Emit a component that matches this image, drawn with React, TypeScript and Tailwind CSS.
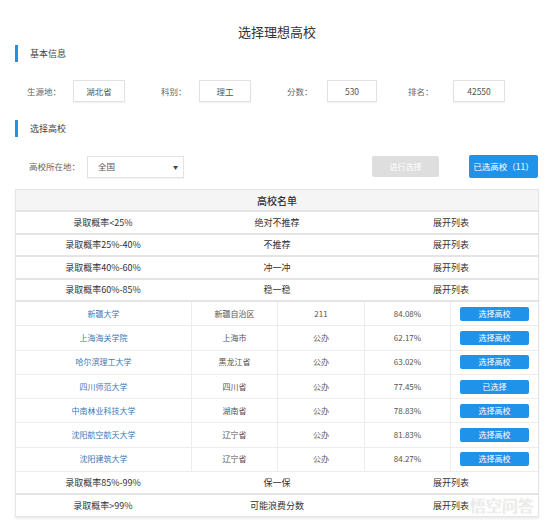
import React from 'react';

const font = { fontFamily: '"Noto Sans CJK SC", "Noto Sans", sans-serif' };

const infoFields = [
  { label: '生源地：', value: '湖北省', labelW: 'w-[46px]', inputW: 'w-[52px]', gap: '' },
  { label: '科别：', value: '理工', labelW: 'w-[38px]', inputW: 'w-[52px]', gap: 'ml-[36px]' },
  { label: '分数：', value: '530', labelW: 'w-[40px]', inputW: 'w-[50px]', gap: 'ml-[36px]' },
  { label: '排名：', value: '42550', labelW: 'w-[45px]', inputW: 'w-[52px]', gap: 'ml-[31px]' },
];

const topGroups = [
  { range: '录取概率<25%', tip: '绝对不推荐' },
  { range: '录取概率25%-40%', tip: '不推荐' },
  { range: '录取概率40%-60%', tip: '冲一冲' },
  { range: '录取概率60%-85%', tip: '稳一稳' },
];

const schools = [
  { name: '新疆大学', area: '新疆自治区', type: '211', rate: '84.08%', picked: false },
  { name: '上海海关学院', area: '上海市', type: '公办', rate: '62.17%', picked: false },
  { name: '哈尔滨理工大学', area: '黑龙江省', type: '公办', rate: '63.02%', picked: false },
  { name: '四川师范大学', area: '四川省', type: '公办', rate: '77.45%', picked: true },
  { name: '中南林业科技大学', area: '湖南省', type: '公办', rate: '78.83%', picked: false },
  { name: '沈阳航空航天大学', area: '辽宁省', type: '公办', rate: '81.83%', picked: false },
  { name: '沈阳建筑大学', area: '辽宁省', type: '公办', rate: '84.27%', picked: false },
];

const bottomGroups = [
  { range: '录取概率85%-99%', tip: '保一保' },
  { range: '录取概率>99%', tip: '可能浪费分数' },
];

const SectionTitle: React.FC<{ text: string; className?: string }> = ({ text, className }) => (
  <div className={`flex items-center h-[17px] pl-[15px] ${className ?? ''}`}>
    <div className="w-[3px] h-full bg-[#1f93ea]" />
    <span className="ml-[12px] text-[9px] text-[#444]">{text}</span>
  </div>
);

const GroupRow: React.FC<{ range: string; tip: string; last?: boolean }> = ({ range, tip, last }) => (
  <div
    className={`grid grid-cols-3 h-[22.5px] items-center text-[9px] text-[#333] bg-white ${
      last ? 'border-b border-[#e6e6e6]' : 'border-b-2 border-[#e4e4e4]'
    }`}
  >
    <div className="text-center">{range}</div>
    <div className="text-center">{tip}</div>
    <div className="text-center">展开列表</div>
  </div>
);

export default function App() {
  return (
    <div className="w-[554px] h-[524px] bg-white relative overflow-hidden" style={font}>
      <h1 className="pt-[24px] h-[40px] leading-[16px] text-center text-[13px] text-[#333]">选择理想高校</h1>

      <SectionTitle text="基本信息" className="mt-[5px]" />

      <div className="mt-[18px] pl-[27px] flex items-center h-[22px]">
        {infoFields.map((f) => (
          <div key={f.label} className={`flex items-center ${f.gap}`}>
            <span className={`${f.labelW} text-[8.5px] text-[#666]`}>{f.label}</span>
            <div
              className={`${f.inputW} h-[22px] border border-[#e2e2e2] shadow-[0_1px_1px_rgba(0,0,0,0.05)] flex items-center justify-center text-[8.5px] text-[#555]`}
            >
              {f.value}
            </div>
          </div>
        ))}
      </div>

      <SectionTitle text="选择高校" className="mt-[18px]" />

      <div className="mt-[18px] pl-[29px] flex items-center h-[23px]">
        <span className="w-[58px] text-[8.5px] text-[#666]">高校所在地：</span>
        <div className="w-[97px] h-[22px] border border-[#e2e2e2] shadow-[0_1px_1px_rgba(0,0,0,0.05)] flex items-center justify-between pl-[10px] pr-[5px] text-[8.5px] text-[#555]">
          <span>全国</span>
          <span className="text-[5px] text-[#444]">▼</span>
        </div>
        <div className="ml-[188px] w-[67px] h-[21px] rounded-[2px] bg-[#dedede] flex items-center justify-center text-[8px] text-white">
          进行选择
        </div>
        <div className="ml-[30px] w-[69px] h-[23px] rounded-[2px] bg-[#1f93ea] flex items-center justify-center text-[8.5px] text-white">
          已选高校（11）
        </div>
      </div>

      <div className="mt-[11px] mx-[15px] border-x border-[#e6e6e6] shadow-[0_2px_2px_rgba(0,0,0,0.08)]">
        <div className="h-[23px] bg-[#f5f5f5] border-t border-b-2 border-[#e4e4e4] flex items-center justify-center text-[10px] font-medium text-[#333]">
          高校名单
        </div>

        {topGroups.map((g) => (
          <GroupRow key={g.range} range={g.range} tip={g.tip} />
        ))}

        {schools.map((s) => (
          <div
            key={s.name}
            className="grid grid-cols-[176px_86px_87px_86px_1fr] h-[24.3px] border-b border-[#ececec] text-[8px] text-[#555]"
          >
            <div className="flex items-center justify-center border-r border-[#ececec] text-[#3a78b8]">{s.name}</div>
            <div className="flex items-center justify-center border-r border-[#ececec]">{s.area}</div>
            <div className="flex items-center justify-center border-r border-[#ececec]">{s.type}</div>
            <div className="flex items-center justify-center border-r border-[#ececec]">{s.rate}</div>
            <div className="flex items-center justify-center">
              <div className="w-[69px] h-[14px] rounded-[2px] bg-[#1f93ea] flex items-center justify-center text-[8px] text-white">
                {s.picked ? '已选择' : '选择高校'}
              </div>
            </div>
          </div>
        ))}

        {bottomGroups.map((g, i) => (
          <GroupRow key={g.range} range={g.range} tip={g.tip} last={i === bottomGroups.length - 1} />
        ))}
      </div>

      {/* watermark */}
      <div className="absolute left-[470px] top-[496px] text-[16px] leading-[18px] text-white/70 [text-shadow:0_0_1px_rgba(0,0,0,0.25)]">
        悟空问答
      </div>
    </div>
  );
}
